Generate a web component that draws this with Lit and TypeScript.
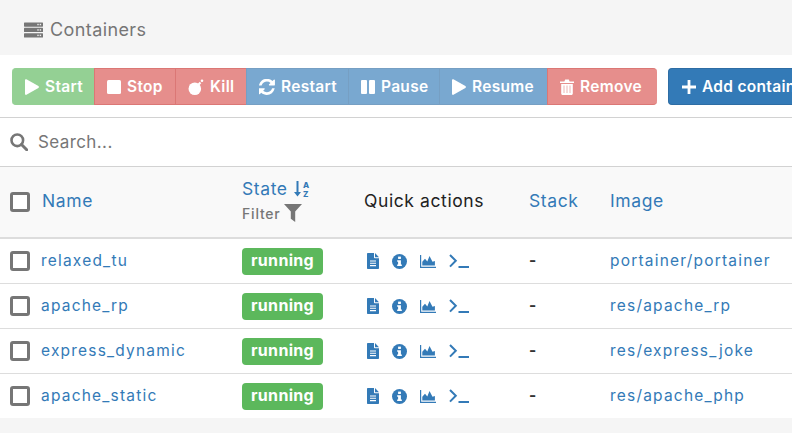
import { LitElement, html, css, svg } from "lit";
import { customElement } from "lit/decorators.js";

const refresh = svg`<path d="M1639 1056q0 5-1 7-64 268-268 434.5t-478 166.5q-146 0-282.5-55t-243.5-157l-129 129q-19 19-45 19t-45-19-19-45v-448q0-26 19-45t45-19h448q26 0 45 19t19 45-19 45l-137 137q71 66 161 102t187 36q134 0 250-65t186-179q11-17 53-117 8-23 30-23h192q13 0 22.5 9.5t9.5 22.5zm25-800v448q0 26-19 45t-45 19h-448q-26 0-45-19t-19-45 19-45l138-138q-148-137-349-137-134 0-250 65t-186 179q-11 17-53 117-8 23-30 23h-199q-13 0-22.5-9.5t-9.5-22.5v-7q65-268 270-434.5t480-166.5q146 0 284 55.5t245 156.5l130-129q19-19 45-19t45 19 19 45z" fill="currentColor"/>`;

const ic = (w: number, h: number, vb: string, body: unknown) =>
  html`<svg class="ic" width=${w} height=${h} viewBox=${vb}>${body}</svg>`;

const icons = {
  play: ic(14, 16, "0 0 14 16", svg`<path d="M0 1.2C0 .3.8 0 1.4.3l12 6.8c.7.4.7 1.4 0 1.8l-12 6.8C.8 16.2 0 15.700 0 14.800z" fill="currentColor"/>`),
  stop: ic(14, 14, "0 0 14 14", svg`<rect width="14" height="14" rx="1.500" fill="currentColor"/>`),
  bomb: ic(16, 16, "0 0 15 16", svg`<circle cx="6.300" cy="9.700" r="6.300" fill="currentColor"/><path d="M10 5.500l2-2" stroke="currentColor" stroke-width="2.200"/><circle cx="13.500" cy="1.800" r="1.300" fill="currentColor"/>`),
  refresh: ic(16, 16, "150 150 1520 1520", refresh),
  pause: ic(14, 14, "0 0 14 14", svg`<rect width="6" height="14" rx="1" fill="currentColor"/><rect x="8" width="6" height="14" rx="1" fill="currentColor"/>`),
  trash: ic(14, 16, "0 0 14 16", svg`<path d="M0 2.600h4.400L5.200.6h3.600l.8 2H14v1.500H0zM1.200 5h11.600v9.500c0 .9-.6 1.500-1.400 1.500H2.600c-.8 0-1.400-.6-1.400-1.500z" fill="currentColor"/><path d="M4 6.500v7.500M7 6.500v7.500M10 6.500v7.500" stroke="#e58e8b" stroke-width="1"/>`),
  plus: ic(14, 14, "0 0 14 14", svg`<path d="M5.600 0h2.800v5.600H14v2.800H8.400V14H5.600V8.400H0V5.600h5.600z" fill="currentColor"/>`),
};

const quick = html`<span class="quick">
  ${ic(12, 16, "0 0 12 16", svg`<path d="M0 1c0-.6.4-1 1-1h6v4.500c0 .5.300.8.800.8H12V15c0 .6-.4 1-1 1H1c-.6 0-1-.4-1-1z" fill="currentColor"/><path d="M8 0l4 4.300H8z" fill="currentColor"/><path d="M3 8h6M3 10.300h6M3 12.600h6" stroke="#fff" stroke-width="1.100"/>`)}
  ${ic(15, 15, "0 0 16 16", svg`<circle cx="8" cy="8" r="8" fill="currentColor"/><rect x="6.500" y="2.800" width="3" height="2.500" fill="#fff"/><path d="M5.500 6.700h4v4.600h1v1.600h-5v-1.600h1V8.300h-1z" fill="#fff"/>`)}
  ${ic(16, 13, "0 0 16 13", svg`<path d="M0 0h1.200v11.700H16V13H0z" fill="currentColor"/><path d="M2.300 10.600V6.800L5 3.800l2.300 2.600L9.500 1l3 5.800 2.400-.8v4.600z" fill="currentColor"/>`)}
  ${ic(20, 14, "0 0 20 14", svg`<path d="M1 1l5.800 5.800L1 12.600" fill="none" stroke="currentColor" stroke-width="2"/><rect x="9.500" y="12" width="10.500" height="2" fill="currentColor"/>`)}
</span>`;

const rows = [
  ["relaxed_tu", "portainer/portainer"],
  ["apache_rp", "res/apache_rp"],
  ["express_dynamic", "res/express_joke"],
  ["apache_static", "res/apache_php"],
];

@customElement("app-root")
export class AppRoot extends LitElement {
  static styles = css`
    :host {
      display: block;
      width: 792px;
      height: 433px;
      overflow: hidden;
      background: #f5f5f5;
      font-family: "Inter", "Liberation Sans", sans-serif;
      color: #333;
    }
    .ic { display: block; flex: none; }
    .title {
      height: 55px;
      display: flex;
      align-items: center;
      gap: 7px;
      padding: 4px 0 0 24px;
      box-sizing: border-box;
      font-size: 18px;
      letter-spacing: 0.4px;
      color: #767676;
    }
    .panel { background: #fff; }
    .toolbar {
      height: 63px;
      padding-top: 13px;
      box-sizing: border-box;
      border-bottom: 1px solid #d2d2d2;
      display: flex;
      overflow: hidden;
      white-space: nowrap;
    }
    .group { display: flex; margin: 0 11px 0 12px; flex: none; }
    .btn {
      height: 37px;
      box-sizing: border-box;
      display: flex;
      align-items: center;
      gap: 6px;
      color: #fff;
      font-size: 15.500px;
      letter-spacing: 0.3px;
      font-weight: 600;
      border: 1px solid;
      border-right-width: 0;
      padding-left: 12px;
      flex: none;
    }
    .group .btn { opacity: 0.65; }
    .group .btn:first-child { border-radius: 4px 0 0 4px; border-left-width: 0; padding-left: 13px; }
    .group .btn:last-child { border-radius: 0 4px 4px 0; }
    .ok { background: #5cb85c; border-color: #5cb85c; }
    .bad { background: #d9534f; border-color: #c9302c; }
    .pri { background: #337ab7; border-color: #2e6da4; }
    .add { border-radius: 4px; width: 200px; padding-left: 13px; }
    .w-start { width: 82px; }
    .w-stop { width: 81px; }
    .w-kill { width: 71px; }
    .w-restart { width: 102px; }
    .w-pause { width: 91px; }
    .w-resume { width: 108px; }
    .w-remove { width: 110px; }
    .search {
      height: 49px;
      box-sizing: border-box;
      border-bottom: 1px solid #d2d2d2;
      display: flex;
      align-items: center;
      gap: 10px;
      padding-left: 10px;
      font-size: 17px;
      letter-spacing: 0.4px;
      color: #767676;
    }
    .row {
      display: grid;
      grid-template-columns: 232px 122px 165px 81px 1fr;
      align-items: center;
      padding-left: 10px;
      height: 45px;
      box-sizing: border-box;
      border-bottom: 1px solid #ddd;
      white-space: nowrap;
      font-size: 15.500px;
      letter-spacing: 1.2px;
    }
    .row:last-child { border-bottom: 0; height: 44px; }
    .head {
      height: 72px;
      background: #f9f9f9;
      border-bottom: 2px solid #ddd;
      font-size: 17.500px;
      letter-spacing: 0.6px;
    }
    .row-name { display: flex; align-items: center; gap: 11px; }
    .head .row-name { gap: 12px; }
    .link { color: #337ab7; }
    .lift { padding-bottom: 2px; }
    .head .lift { padding-bottom: 4px; }
    .box {
      width: 20px;
      height: 20px;
      box-sizing: border-box;
      border: 3px solid #767676;
      border-radius: 3px;
      background: #fff;
      flex: none;
    }
    .state { display: flex; flex-direction: column; gap: 5px; margin-top: -4px; }
    .state-top { display: flex; align-items: center; gap: 5px; }
    .sort { color: #337ab7; display: block; flex: none; }
    .sort text { font: 800 8px "Inter", sans-serif; letter-spacing: 0; fill: currentColor; }
    .filter { display: flex; align-items: center; gap: 3px; font-size: 14px; letter-spacing: 0.8px; color: #767676; font-weight: 500; }
    .badge {
      width: 81px;
      height: 27px;
      box-sizing: border-box;
      padding-bottom: 2px;
      border-radius: 4px;
      background: #5cb85c;
      color: #fff;
      font-weight: 700;
      font-size: 16px;
      letter-spacing: 0.3px;
      display: flex;
      align-items: center;
      justify-content: center;
    }
    .quick { display: flex; align-items: center; gap: 13px; color: #337ab7; margin-left: 3px; }
    .dash { font-weight: 700; }
    .qa { color: #222; }
  `;

  render() {
    return html`
      <div class="title">
        ${ic(19, 16, "0 0 20 16", svg`<g fill="#767676"><rect width="20" height="4.500" rx=".6"/><rect y="5.700" width="20" height="4.500" rx=".6"/><rect y="11.400" width="20" height="4.500" rx=".6"/></g><g fill="#eee"><rect x="14" y="1.500" width="1.500" height="1.500"/><rect x="16.500" y="1.500" width="1.500" height="1.500"/><rect x="14" y="7.200" width="1.500" height="1.500"/><rect x="16.500" y="7.200" width="1.500" height="1.500"/><rect x="14" y="12.900" width="1.500" height="1.500"/><rect x="16.500" y="12.900" width="1.500" height="1.500"/></g>`)}
        Containers
      </div>
      <div class="panel">
        <div class="toolbar">
          <div class="group">
            <div class="btn ok w-start">${icons.play}Start</div>
            <div class="btn bad w-stop">${icons.stop}Stop</div>
            <div class="btn bad w-kill">${icons.bomb}Kill</div>
            <div class="btn pri w-restart">${icons.refresh}Restart</div>
            <div class="btn pri w-pause">${icons.pause}Pause</div>
            <div class="btn pri w-resume">${icons.play}Resume</div>
            <div class="btn bad w-remove">${icons.trash}Remove</div>
          </div>
          <div class="btn pri add">${icons.plus}Add container</div>
        </div>
        <div class="search">
          ${ic(18, 18, "0 0 18 18", svg`<circle cx="7.300" cy="7.300" r="5.800" fill="none" stroke="#767676" stroke-width="2.600"/><path d="M11.500 11.500l5.200 5.200" stroke="#767676" stroke-width="3" stroke-linecap="round"/>`)}
          Search...
        </div>
        <div class="row head">
          <div class="row-name"><span class="box"></span><span class="link lift">Name</span></div>
          <div class="state">
            <div class="state-top">
              <span class="link">State</span>
              <svg class="sort" width="17" height="16" viewBox="0 0 17 16">
                <path d="M3.500 0h2v11h2.500l-3.500 4.500L1 11h2.500z" fill="currentColor" />
                <text x="10" y="7">A</text>
                <text x="10" y="15.500">Z</text>
              </svg>
            </div>
            <div class="filter">
              Filter
              ${ic(18, 18, "0 0 18 18", svg`<path d="M0 0h18l-6.800 7.500V18l-4.400-3.200V7.500z" fill="#767676"/>`)}
            </div>
          </div>
          <div class="qa lift">Quick actions</div>
          <div class="link lift">Stack</div>
          <div class="link lift">Image</div>
        </div>
        ${rows.map(
          ([name, image]) => html`
            <div class="row">
              <div class="row-name"><span class="box"></span><span class="link lift">${name}</span></div>
              <div><span class="badge">running</span></div>
              ${quick}
              <div class="dash lift">-</div>
              <div class="link lift">${image}</div>
            </div>
          `
        )}
      </div>
    `;
  }
}
